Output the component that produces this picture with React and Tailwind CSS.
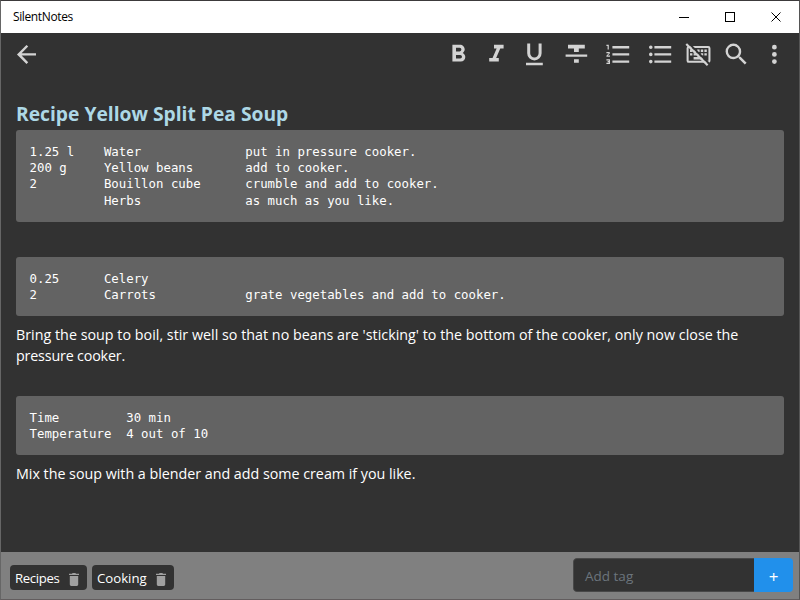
const light = '#d3d3d3';

const paths = {
  back: 'M20,11V13H8L13.5,18.5L12.08,19.92L4.16,12L12.08,4.08L13.5,5.5L8,11H20Z',
  bold: 'M13.5,15.5H10V12.5H13.5A1.5,1.5 0 0,1 15,14A1.5,1.5 0 0,1 13.5,15.5M10,6.5H13A1.5,1.5 0 0,1 14.5,8A1.5,1.5 0 0,1 13,9.5H10M15.6,10.79C16.57,10.11 17.25,9 17.25,8C17.25,5.74 15.5,4 13.25,4H7V18H14.04C16.14,18 17.75,16.3 17.75,14.21C17.75,12.69 16.89,11.39 15.6,10.79Z',
  italic: 'M10,4V7H12.21L8.79,15H6V18H14V15H11.79L15.21,7H18V4H10Z',
  underline: 'M5,21H19V19H5V21M12,17A6,6 0 0,0 18,11V3H15.5V11A3.5,3.5 0 0,1 12,14.5A3.5,3.5 0 0,1 8.5,11V3H6V11A6,6 0 0,0 12,17Z',
  strike: 'M3,14H21V12H3M5,4V7H10V10H14V7H19V4M10,19H14V16H10V19Z',
  numbered: 'M7,13V11H21V13H7M7,19V17H21V19H7M7,7V5H21V7H7M3,8V5H2V4H4V8H3M2,17V16H5V20H2V19H4V18.5H3V17.5H4V17H2M4.25,10A0.75,0.75 0 0,1 5,10.75C5,10.95 4.92,11.14 4.79,11.27L3.12,13H5V14H2V13.08L4,11H2V10H4.25Z',
  bulleted: 'M7,5H21V7H7V5M7,13V11H21V13H7M4,4.5A1.5,1.5 0 0,1 5.5,6A1.5,1.5 0 0,1 4,7.5A1.5,1.5 0 0,1 2.5,6A1.5,1.5 0 0,1 4,4.5M4,10.5A1.5,1.5 0 0,1 5.5,12A1.5,1.5 0 0,1 4,13.5A1.5,1.5 0 0,1 2.5,12A1.5,1.5 0 0,1 4,10.5M7,19V17H21V19H7M4,16.5A1.5,1.5 0 0,1 5.5,18A1.5,1.5 0 0,1 4,19.5A1.5,1.5 0 0,1 2.5,18A1.5,1.5 0 0,1 4,16.5Z',
  search: 'M9.5,3A6.5,6.5 0 0,1 16,9.5C16,11.11 15.41,12.59 14.44,13.73L14.71,14H15.5L20.5,19L19,20.5L14,15.5V14.71L13.73,14.44C12.59,15.41 11.11,16 9.5,16A6.5,6.5 0 0,1 3,9.5A6.5,6.5 0 0,1 9.5,3M9.5,5C7,5 5,7 5,9.5C5,12 7,14 9.5,14C12,14 14,12 14,9.5C14,7 12,5 9.5,5Z',
  menu: 'M12,16A2,2 0 0,1 14,18A2,2 0 0,1 12,20A2,2 0 0,1 10,18A2,2 0 0,1 12,16M12,10A2,2 0 0,1 14,12A2,2 0 0,1 12,14A2,2 0 0,1 10,12A2,2 0 0,1 12,10M12,4A2,2 0 0,1 14,6A2,2 0 0,1 12,8A2,2 0 0,1 10,6A2,2 0 0,1 12,4Z',
};

function Icon({ name, className = '' }) {
  return (
    <svg viewBox="0 0 24 24" fill={light} className={`block size-[28.8px] shrink-0 ${className}`}>
      <path d={paths[name]} />
    </svg>
  );
}

function KeyboardOff({ className = '' }) {
  return (
    <svg viewBox="0 0 24 24" fill="none" className={`block size-[28.8px] shrink-0 ${className}`}>
      <rect x="3" y="5.8" width="18.2" height="12.4" rx="1" stroke={light} strokeWidth="1.7" />
      <path
        d="M5 8h2v2H5zM8 8h2v2H8zM11 8h2v2h-2zM14 8h2v2h-2zM17 8h2v2h-2zM5 11h2v2H5zM8 11h2v2H8zM11 11h2v2h-2zM14 11h2v2h-2zM17 11h2v2h-2zM8 14.2h8v2H8z"
        fill={light}
      />
      <path d="M3.6 2.4L21.4 20.2" stroke="#323232" strokeWidth="1.7" />
      <path d="M1.9 3.3L19.7 21.1" stroke={light} strokeWidth="1.8" />
    </svg>
  );
}

function TitleBar() {
  return (
    <div className="flex h-8 shrink-0 items-center bg-white pl-3 font-['Open_Sans','Noto_Sans',sans-serif] text-[12px] leading-4 text-black">
      <span className="w-[60px] whitespace-nowrap tracking-[-0.38px]">SilentNotes</span>
      <svg viewBox="0 0 110 16" className="ml-auto mr-[15px] block h-4 w-[110px]" fill="none" stroke="#000" shapeRendering="crispEdges">
        <path d="M5 8.5H15M51.5 3.5H60.5V12.5H51.5Z" />
        <path d="M97.5 3.5L106.5 12.5M106.5 3.5L97.5 12.5" shapeRendering="auto" />
      </svg>
    </div>
  );
}

function Code({ children, className = '' }) {
  return (
    <pre className={`rounded-[3px] bg-[#636363] px-[13.5px] font-['DejaVu_Sans_Mono',monospace] text-[12.36px] leading-[16.2px] text-white ${className}`}>
      {children}
    </pre>
  );
}

function Tag({ children, className }) {
  return (
    <div className={`flex h-[25px] items-center rounded-[4px] bg-[#323232] pl-[5px] text-[13.2px] text-white ${className}`}>
      <span className="whitespace-nowrap pt-[2px]">{children}</span>
      <svg viewBox="0 0 10 13" className="ml-auto mr-2 mt-[3px] block h-[13px] w-[10px]" fill="#a0a0a0">
        <path d="M0 .8H3L3.6 0H6.4L7 .8H10V2H0ZM.8 3H9.2V11.6Q9.2 13 7.8 13H2.2Q.8 13 .8 11.6Z" />
      </svg>
    </div>
  );
}

export default function App() {
  return (
    <div className="flex h-[600px] w-[800px] flex-col overflow-hidden border border-b-[#625d5e] border-l-[#666] border-r-[#555] border-t-[#3c3a3b] bg-[#323232] font-['Open_Sans','Noto_Sans',sans-serif]">
      <TitleBar />
      <div className="flex h-[43px] shrink-0 items-center pl-[11px]">
        <Icon name="back" />
        <Icon name="bold" className="ml-[402.8px]" />
        <Icon name="italic" className="ml-[9.6px]" />
        <Icon name="underline" className="ml-[9.6px]" />
        <Icon name="strike" className="ml-[13px]" />
        <Icon name="numbered" className="ml-[12.6px]" />
        <Icon name="bulleted" className="ml-[13.2px]" />
        <KeyboardOff className="ml-[9.4px]" />
        <Icon name="search" className="ml-[9.2px]" />
        <Icon name="menu" className="ml-[9px]" />
      </div>
      <main className="flex flex-1 flex-col px-[15px] pt-[24px] text-[14.3px] leading-[21px] text-white">
        <h1 className="h-[30px] whitespace-nowrap text-[19.25px] font-bold leading-[28px] text-[#add8e6]">Recipe Yellow Split Pea Soup</h1>
        <Code className="h-[92px] pt-[14px]">{`1.25 l    Water              put in pressure cooker.
200 g     Yellow beans       add to cooker.
2         Bouillon cube      crumble and add to cooker.
          Herbs              as much as you like.`}</Code>
        <Code className="mt-[35px] h-[59px] pt-[14px]">{`0.25      Celery
2         Carrots            grate vegetables and add to cooker.`}</Code>
        <p className="mt-[8px] whitespace-nowrap">
          <span className="tracking-[0.01px]">Bring the soup to boil, stir well so that no beans are 'sticking' to the bottom of the cooker, only now close the</span>
          <br />
          <span className="tracking-[-0.17px]">pressure cooker.</span>
        </p>
        <Code className="mt-[30px] h-[59px] pt-[14px]">{`Time         30 min
Temperature  4 out of 10`}</Code>
        <p className="mt-[8px] whitespace-nowrap tracking-[-0.02px]">Mix the soup with a blender and add some cream if you like.</p>
      </main>
      <footer className="flex h-[47px] shrink-0 items-start bg-[#808080] pl-[9px] pr-[6px]">
        <Tag className="mt-[13px] w-[77px] tracking-[-0.35px]">Recipes</Tag>
        <Tag className="ml-[5px] mt-[13px] w-[82px]">Cooking</Tag>
        <div className="ml-auto mt-[6px] flex h-[34px] w-[220px] overflow-hidden rounded-[4px]">
          <div className="flex flex-1 items-center rounded-l-[4px] border border-r-0 border-[#484848] bg-[#323232] pl-[11px] pt-[2px] text-[13.5px] text-[#6c757d]">Add tag</div>
          <div className="flex w-[39px] items-center justify-center bg-[#2190eb] pt-[4px] text-[17px] text-white">+</div>
        </div>
      </footer>
    </div>
  );
}
